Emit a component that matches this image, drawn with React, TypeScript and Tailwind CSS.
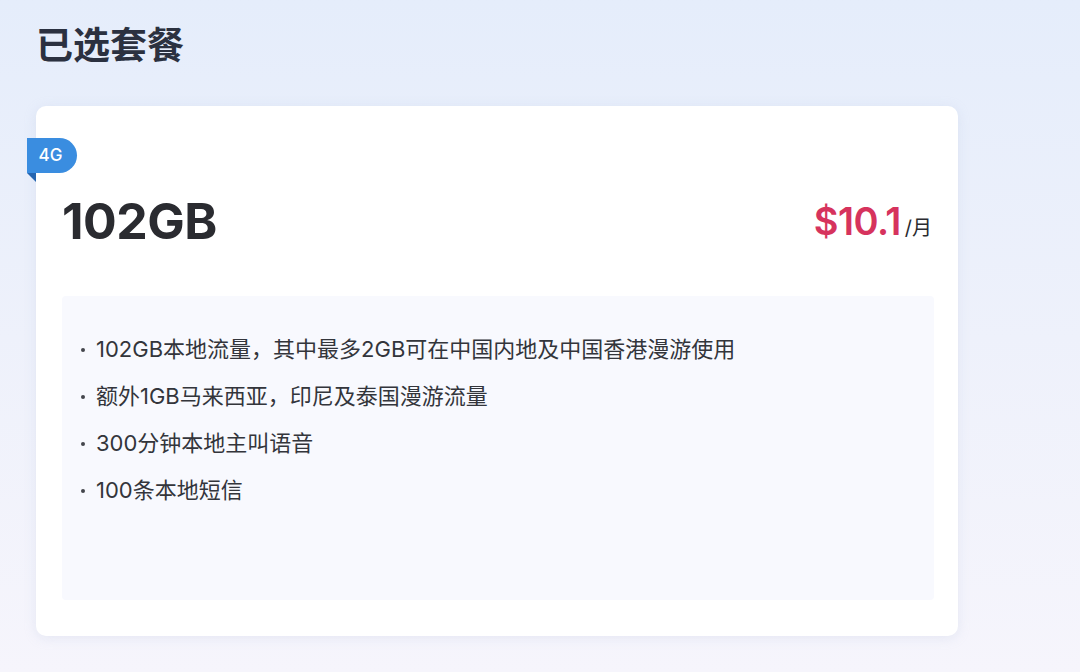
const features = [
  "102GB本地流量，其中最多2GB可在中国内地及中国香港漫游使用",
  "额外1GB马来西亚，印尼及泰国漫游流量",
  "300分钟本地主叫语音",
  "100条本地短信",
];

const font = { fontFamily: 'Inter, "Noto Sans CJK SC", sans-serif' };

export default function App() {
  return (
    <div
      className="w-[1080px] h-[672px] overflow-hidden bg-gradient-to-b from-[#e5edfb] via-[#eef1fb] to-[#f6f5fc] pl-[36px] pt-[19px]"
      style={font}
    >
      <h1 className="text-[37px] leading-[54px] font-bold text-[#2b3140]">已选套餐</h1>

      <div className="mt-[33px] w-[922px] h-[530px] rounded-[10px] bg-white shadow-[0_2px_12px_rgba(180,190,220,0.25)] pt-[32px] pl-[26px] pr-[24px] pb-[36px] flex flex-col">
        {/* badge */}
        <div className="relative -ml-[35px] w-[50px] h-[35px]">
          <div className="h-full rounded-tl-[6px] rounded-r-full bg-[#3a8de0] flex items-center justify-center pr-[3px]">
            <span className="text-white text-[17px] font-medium">4G</span>
          </div>
          <svg className="absolute left-0 top-[35px]" width="9" height="9" viewBox="0 0 9 9">
            <polygon points="0,0 9,0 9,9" fill="#2565b0" />
          </svg>
        </div>

        <div className="mt-[23px] h-[50px] flex items-center justify-between">
          <span className="text-[50px] leading-[50px] font-bold text-[#2a2b30] tracking-[-0.5px]">102GB</span>
          <div className="flex items-baseline pr-[2px] leading-[40px] mt-[6px]">
            <span className="text-[38px] font-semibold text-[#d6335d] tracking-[-0.5px]">$10.1</span>
            <span className="ml-[4px] text-[20px] text-[#2a2b30]">/月</span>
          </div>
        </div>

        <div className="mt-[50px] flex-1 rounded-[4px] bg-[#f8f9fe] pl-[19px] pt-[30px]">
          {features.map((f) => (
            <div key={f} className="flex items-center leading-[47px] text-[22px] text-[#33353b]">
              <span className="w-[4px] h-[4px] rounded-full bg-[#44464c] mr-[11px] shrink-0" />
              <span>{f}</span>
            </div>
          ))}
        </div>
      </div>
    </div>
  );
}
